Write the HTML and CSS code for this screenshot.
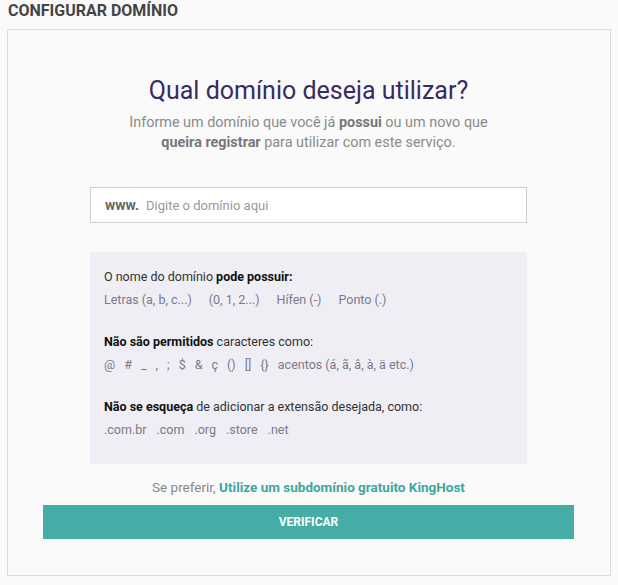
FILE: index.html
```html
<!DOCTYPE html>
<html lang="pt-BR">
<head>
  <meta charset="UTF-8" />
  <meta name="viewport" content="width=device-width, initial-scale=1.0"/>
  <title>Configurar domínio</title>
  <link rel="stylesheet" href="styles.css">
</head>
<body>
  <div class="page">
    <h1 class="page-title">CONFIGURAR DOMÍNIO</h1>

    <div class="card">
      <h2>Qual domínio deseja utilizar?</h2>
      <p class="lead">Informe um domínio que você já <strong>possui</strong> ou um novo que <strong>queira registrar</strong> para utilizar com este serviço.</p>

      <label class="domain-input">
        <span class="prefix">www.</span>
        <input type="text" placeholder="Digite o domínio aqui">
      </label>

      <div class="rules">
        <div class="rule">
          <p class="rule-title">O nome do domínio <strong>pode possuir:</strong></p>
          <div class="rule-items wide">
            <span>Letras (a, b, c...)</span>
            <span>(0, 1, 2...)</span>
            <span>Hífen (-)</span>
            <span>Ponto (.)</span>
          </div>
        </div>

        <div class="rule">
          <p class="rule-title"><strong>Não são permitidos</strong> caracteres como:</p>
          <div class="rule-items chars">
            <span>@</span>
            <span>#</span>
            <span>_</span>
            <span>,</span>
            <span>;</span>
            <span>$</span>
            <span>&amp;</span>
            <span>ç</span>
            <span>()</span>
            <span>[]</span>
            <span>{}</span>
            <span>acentos (á, ã, â, à, ä etc.)</span>
          </div>
        </div>

        <div class="rule">
          <p class="rule-title"><strong>Não se esqueça</strong> de adicionar a extensão desejada, como:</p>
          <div class="rule-items">
            <span>.com.br</span>
            <span>.com</span>
            <span>.org</span>
            <span>.store</span>
            <span>.net</span>
          </div>
        </div>
      </div>

      <p class="alt">Se preferir, <a href="#">Utilize um subdomínio gratuito KingHost</a></p>

      <button class="btn-verify">VERIFICAR</button>
    </div>
  </div>
</body>
</html>
```

FILE: styles.css
```css
* {
  box-sizing: border-box;
  margin: 0;
  padding: 0;
}

body {
  font-family: Roboto, 'Liberation Sans', sans-serif;
  background-color: #fafafa;
  color: #333;
}

.page {
  padding: 0 8px 0 7px;
}

.page-title {
  font-size: 16px;
  font-weight: 700;
  color: #444;
  line-height: 22px;
  padding: 0 0 7px 1px;
}

.card {
  width: 604px;
  border: 1px solid #dcdcdc;
  background: #fafafa;
  padding: 45px 36px 36px 35px;
  display: flex;
  flex-direction: column;
  align-items: center;
}

.card h2 {
  font-size: 25px;
  font-weight: 400;
  color: #3a2a61;
  line-height: 32px;
  text-align: center;
}

.lead {
  margin-top: 6px;
  width: 390px;
  font-size: 14.4px;
  line-height: 20px;
  color: #8a8a8a;
  text-align: center;
}

.lead strong {
  color: #777;
  font-weight: 700;
}

.domain-input {
  margin-top: 34px;
  width: 437px;
  height: 36px;
  background: #fff;
  border: 1px solid #cfcfcf;
  display: flex;
  align-items: center;
  padding: 0 14px;
}

.prefix {
  font-size: 14px;
  font-weight: 700;
  color: #666;
  margin-right: 7px;
}

.domain-input input {
  flex: 1;
  border: none;
  outline: none;
  background: transparent;
  font-family: inherit;
  font-size: 13px;
  color: #333;
}

.domain-input input::placeholder {
  color: #999;
}

.rules {
  margin-top: 29px;
  width: 437px;
  background: #efeef4;
  padding: 15px 14px 23px;
  display: flex;
  flex-direction: column;
  gap: 21px;
}

.rule-title {
  font-size: 12.5px;
  line-height: 20px;
  color: #333;
  margin-bottom: 2px;
}

.rule-title strong {
  color: #111;
}

.rule-items {
  display: flex;
  flex-wrap: wrap;
  gap: 10px;
  font-size: 12.5px;
  line-height: 22px;
  color: #7b7a8a;
}

.rule-items.wide {
  gap: 17px;
}

.rule-items.chars {
  gap: 9px;
}

.alt {
  margin-top: 13px;
  font-size: 13.5px;
  line-height: 20px;
  color: #888;
}

.alt a {
  color: #3ea69d;
  font-weight: 700;
  text-decoration: none;
}

.btn-verify {
  margin-top: 8px;
  width: 531px;
  height: 34px;
  border: none;
  background: #43ada6;
  color: #fff;
  font-family: inherit;
  font-size: 12px;
  font-weight: 700;
  cursor: pointer;
}
```
